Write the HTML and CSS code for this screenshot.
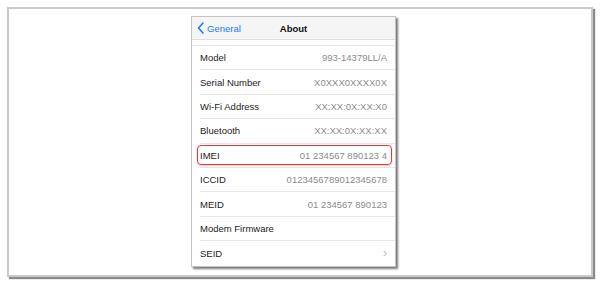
FILE: index.html
```html
<!DOCTYPE html>
<html lang="en">

<head>
    <meta charset="UTF-8">
    <title>About</title>
    <link rel="stylesheet" href="styles.css">
</head>

<body>
    <div class="frame">
        <div class="phone">
            <div class="nav">
                <span class="back">
                    <svg width="7" height="12" viewBox="0 0 7 12"><path d="M6 1 L1.5 6 L6 11" fill="none" stroke="#1a7cf5" stroke-width="1.6" stroke-linecap="round" stroke-linejoin="round"/></svg>
                    General
                </span>
                <span class="title">About</span>
            </div>
            <div class="gap"></div>
            <ul class="rows">
                <li><span>Model</span><span class="value">993-14379LL/A</span></li>
                <li><span>Serial Number</span><span class="value">X0XXX0XXXX0X</span></li>
                <li><span>Wi-Fi Address</span><span class="value">XX:XX:0X:XX:X0</span></li>
                <li><span>Bluetooth</span><span class="value">XX:XX:0X:XX:XX</span></li>
                <li class="marked"><span>IMEI</span><span class="value">01 234567 890123 4</span><span class="highlight"></span></li>
                <li><span>ICCID</span><span class="value">0123456789012345678</span></li>
                <li><span>MEID</span><span class="value">01 234567 890123</span></li>
                <li><span>Modem Firmware</span><span class="value"></span></li>
                <li><span>SEID</span><span class="value arrow">&#8250;</span></li>
            </ul>
        </div>
    </div>
</body>

</html>
```

FILE: styles.css
```css
body {
    margin: 0;
    padding: 7px;
    background: #fff;
    font-family: 'Liberation Sans', Arial, sans-serif;
}

.frame {
    height: 259px;
    border: 2px solid #c9c9c9;
    box-shadow: 2px 2px 1px #8a8a8a;
    padding: 7px 0 0 182px;
}

.phone {
    width: 203px;
    height: 249px;
    border: 1px solid #c4c4c4;
    box-shadow: 2px 2px 2px #7a7a7a;
    background: #fff;
    overflow: hidden;
}

.nav {
    position: relative;
    height: 22px;
    background: #f5f5f5;
    border-bottom: 1px solid #dedede;
    display: flex;
    align-items: center;
}

.back {
    display: flex;
    align-items: center;
    gap: 3px;
    padding-left: 5px;
    color: #1a7cf5;
    font-size: 9.5px;
}

.title {
    position: absolute;
    left: 0;
    right: 0;
    text-align: center;
    font-size: 9.5px;
    font-weight: bold;
    color: #111;
    pointer-events: none;
}

.gap {
    height: 5px;
    border-bottom: 1px solid #e6e6e6;
}

.rows {
    list-style: none;
    margin: 0;
    padding: 0;
}

.rows li {
    position: relative;
    height: 24.4px;
    margin-left: 8px;
    padding-right: 8px;
    display: flex;
    align-items: center;
    justify-content: space-between;
    font-size: 9.5px;
    color: #1c1c1c;
    border-bottom: 1px solid #e8e8e8;
    box-sizing: border-box;
}

.rows li:last-child {
    border-bottom: none;
}

.value {
    color: #8c8c8c;
}

.arrow {
    color: #b8b8b8;
    font-size: 12px;
}

.highlight {
    position: absolute;
    left: -3px;
    right: 3px;
    top: 1px;
    bottom: 2px;
    border: 1.5px solid #e2383c;
    border-radius: 4px;
    box-shadow: 0 1px 2px rgba(0, 0, 0, 0.2);
}
```
